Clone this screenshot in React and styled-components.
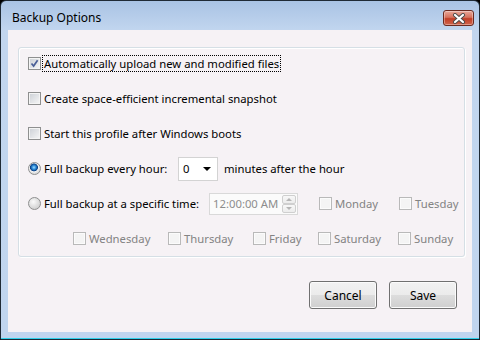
import React from "react";
import styled, { createGlobalStyle } from "styled-components";

const GlobalStyle = createGlobalStyle`
  body {
    margin: 0;
    background: #000;
    font-family: "Noto Sans", "Open Sans", sans-serif;
  }
`;

const Window = styled.div`
  width: 480px;
  height: 340px;
  box-sizing: border-box;
  border: 1px solid #1f2a36;
  border-radius: 6px 6px 0 0;
  background: linear-gradient(#a9c3e4, #c2d6ef 30px, #c0d5ef);
  box-shadow: inset 0 -1px 0 #2fd0ea;
  padding: 0 7px 7px 7px;
  display: flex;
  flex-direction: column;
`;

const TitleBar = styled.div`
  height: 29px;
  display: flex;
  align-items: flex-start;
  justify-content: space-between;
`;

const Title = styled.div`
  margin: 9px 0 0 4px;
  font-size: 12px;
  line-height: 16px;
  color: #000;
`;

const CloseButton = styled.div`
  margin: 9px -2px 0 0;
  width: 31px;
  height: 16px;
  box-sizing: border-box;
  border: 1px solid #6b2a20;
  border-radius: 3px;
  background: linear-gradient(#e9a89a, #d6725e 45%, #c13e27 55%, #d0654c);
  box-shadow: inset 0 0 0 1px rgba(255, 255, 255, 0.35);
  display: flex;
  align-items: center;
  justify-content: center;
`;

const Client = styled.div`
  flex: 1;
  background: #f6f2f5;
  padding: 17px 7px 0 10px;
  display: flex;
  flex-direction: column;
  font-size: 11.3px;
`;

const GroupBox = styled.div`
  border: 1px solid #d5dfe5;
  border-radius: 3px;
  box-shadow: inset 1px 1px 0 #fff, 1px 1px 0 #fff;
  padding: 0 0 2px 9px;
  display: flex;
  flex-direction: column;
  gap: 4px;
`;

const Row = styled.div`
  height: 31px;
  display: flex;
  align-items: center;
  padding-left: ${({ $indent }) => $indent || 0}px;
`;

const Box = styled.span`
  flex: none;
  width: 13px;
  height: 13px;
  box-sizing: border-box;
  border: 1px solid ${({ $disabled }) => ($disabled ? "#b9b9b9" : "#8e8f8f")};
  background: ${({ $disabled }) =>
    $disabled
      ? "#f4f4f4"
      : "linear-gradient(135deg, #cbcfd5, #f7f7f7)"};
  box-shadow: inset 0 0 0 1px ${({ $disabled }) => ($disabled ? "#fbfbfb" : "#f4f4f4")};
  position: relative;
`;

const Round = styled.span`
  flex: none;
  width: 13px;
  height: 13px;
  box-sizing: border-box;
  border-radius: 50%;
  border: 1px solid #8e8f8f;
  background: ${({ $checked }) =>
    $checked
      ? "radial-gradient(circle at 45% 40%, #9fdcff 0, #2a8ad8 2px, #0b3f84 3.6px, #f4f4f4 4.3px, #dcdcdc 6px)"
      : "radial-gradient(circle at 40% 35%, #fafafa, #d9d9d9 60%, #c6c6c6)"};
`;

const Label = styled.span`
  margin-left: 1px;
  padding: 0 1px;
  line-height: 15px;
  color: ${({ $disabled }) => ($disabled ? "#838383" : "#000")};
  border: 1px ${({ $focused }) => ($focused ? "dotted #000" : "solid transparent")};
  white-space: nowrap;
  width: ${({ $width }) => ($width ? `${$width}px` : "auto")};
  box-sizing: border-box;
`;

const Item = styled.div`
  display: flex;
  align-items: center;
  flex: none;
  width: ${({ $width }) => ($width ? `${$width}px` : "auto")};
  margin-left: ${({ $offset }) => $offset || 0}px;
`;

const Combo = styled.div`
  width: 40px;
  height: 24px;
  box-sizing: border-box;
  border: 1px solid #d3d3d3;
  background: #fff;
  display: flex;
  align-items: center;
  justify-content: space-between;
  padding: 0 6px 0 4px;
  color: #000;
`;

const Arrow = styled.span`
  width: 0;
  height: 0;
  border-left: 4px solid transparent;
  border-right: 4px solid transparent;
  border-top: 4px solid #000;
`;

const Text = styled.span`
  margin-left: 6px;
  color: #000;
  white-space: nowrap;
`;

const Spinner = styled.div`
  width: 89px;
  height: 22px;
  box-sizing: border-box;
  border: 1px solid #d9d9d9;
  background: #fbfbfb;
  display: flex;
  align-items: center;
  justify-content: space-between;
  padding: 0 1px 0 3px;
  color: #8d8d8d;
  white-space: nowrap;
`;

const SpinButtons = styled.div`
  display: flex;
  flex-direction: column;
`;

const SpinButton = styled.div`
  width: 14px;
  height: 9px;
  box-sizing: border-box;
  border: 1px solid #cfcfcf;
  border-radius: 2px;
  background: linear-gradient(#f8f8f8, #ececec);
  display: flex;
  align-items: center;
  justify-content: center;
  &::after {
    content: "";
    border-left: 3px solid transparent;
    border-right: 3px solid transparent;
    ${({ $down }) =>
      $down ? "border-top: 3px solid #b5b5b5;" : "border-bottom: 3px solid #b5b5b5;"}
  }
`;

const ButtonRow = styled.div`
  margin-top: 24px;
  padding-right: 8px;
  display: flex;
  justify-content: flex-end;
  gap: 12px;
`;

const Button = styled.button`
  width: 68px;
  height: 28px;
  border: 1px solid #707070;
  border-radius: 3px;
  background: linear-gradient(#f2f2f2, #ebebeb 50%, #dddddd 50%, #cfcfcf);
  box-shadow: inset 0 0 0 1px #fbfbfb;
  font-family: inherit;
  font-size: 12px;
  color: #000;
  padding: 0;
`;

const CheckBox = ({ checked, disabled }) => (
  <Box $disabled={disabled}>
    {checked && (
      <svg width="11" height="11" viewBox="0 0 11 11" style={{ position: "absolute", left: 0, top: 0 }}>
        <path d="M2.5 5.5 L4.6 8 L8.6 2.2" fill="none" stroke="#4a5f97" strokeWidth="1.7" />
      </svg>
    )}
  </Box>
);

const Day = ({ label, width, offset }) => (
  <Item $width={width} $offset={offset}>
    <CheckBox disabled />
    <Label $disabled>{label}</Label>
  </Item>
);

export default function App() {
  return (
    <>
      <GlobalStyle />
      <Window>
        <TitleBar>
          <Title>Backup Options</Title>
          <CloseButton>
            <svg width="14" height="11" viewBox="0 0 14 11">
              <path d="M3 2 L11 9 M11 2 L3 9" stroke="#4a4a4a" strokeWidth="4" strokeLinecap="round" />
              <path d="M3 2 L11 9 M11 2 L3 9" stroke="#fff" strokeWidth="2.2" strokeLinecap="round" />
            </svg>
          </CloseButton>
        </TitleBar>
        <Client>
          <GroupBox>
            <Row>
              <CheckBox checked />
              <Label $focused>Automatically upload new and modified files</Label>
            </Row>
            <Row>
              <CheckBox />
              <Label>Create space-efficient incremental snapshot</Label>
            </Row>
            <Row>
              <CheckBox />
              <Label>Start this profile after Windows boots</Label>
            </Row>
            <Row>
              <Round $checked />
              <Label $width={136}>Full backup every hour:</Label>
              <Combo>
                0<Arrow />
              </Combo>
              <Text>minutes after the hour</Text>
            </Row>
            <Row>
              <Round />
              <Label $width={167}>Full backup at a specific time:</Label>
              <Spinner>
                12:00:00 AM
                <SpinButtons>
                  <SpinButton />
                  <SpinButton $down />
                </SpinButtons>
              </Spinner>
              <Day label="Monday" width={80} offset={21} />
              <Day label="Tuesday" />
            </Row>
            <Row $indent={45}>
              <Day label="Wednesday" width={95} />
              <Day label="Thursday" width={85} />
              <Day label="Friday" width={65} />
              <Day label="Saturday" width={80} />
              <Day label="Sunday" />
            </Row>
          </GroupBox>
          <ButtonRow>
            <Button>Cancel</Button>
            <Button>Save</Button>
          </ButtonRow>
        </Client>
      </Window>
    </>
  );
}
